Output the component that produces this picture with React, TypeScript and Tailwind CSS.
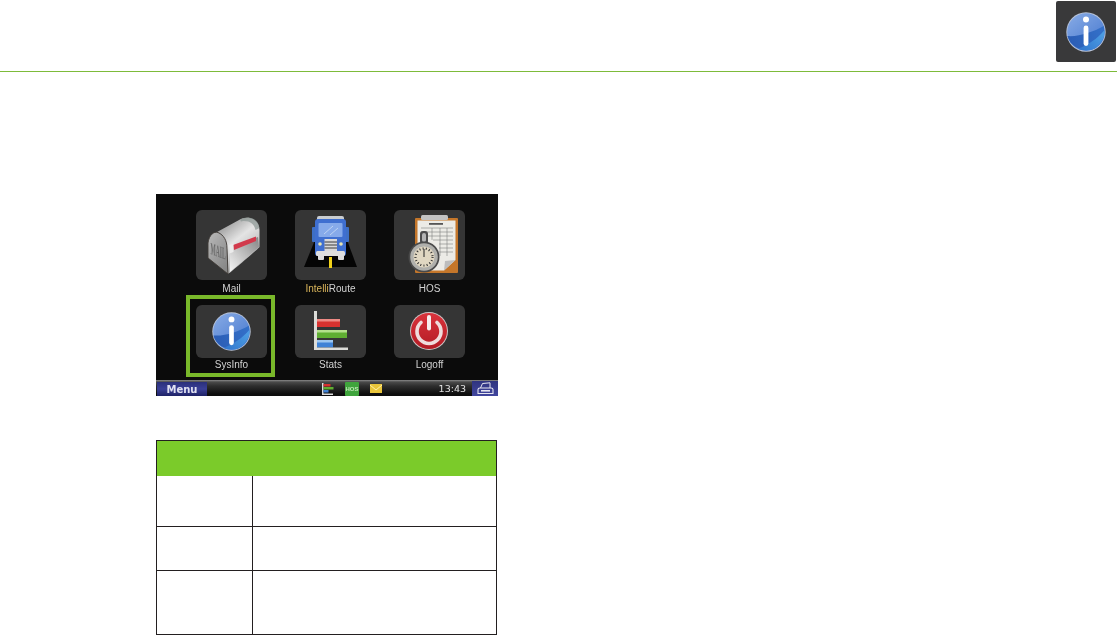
import React from "react";

const font = { fontFamily: '"Liberation Sans", "Noto Sans", sans-serif' };

function InfoGlyph({ id, size }: { id: string; size: number }) {
  return (
    <svg width={size} height={size} viewBox="0 0 40 40" className="blur-[0.4px]">
      <defs>
        <linearGradient id={`${id}a`} x1="0.15" y1="0" x2="0.8" y2="0.8">
          <stop offset="0" stopColor="#84a8e4" />
          <stop offset="1" stopColor="#4f7fd2" />
        </linearGradient>
        <linearGradient id={`${id}b`} x1="0" y1="0.7" x2="1" y2="0.5">
          <stop offset="0" stopColor="#2a5cb4" />
          <stop offset="1" stopColor="#336fc8" />
        </linearGradient>
        <linearGradient id={`${id}c`} x1="0" y1="1" x2="1" y2="0.3">
          <stop offset="0" stopColor="#2f74cc" />
          <stop offset="1" stopColor="#4c9ce2" />
        </linearGradient>
      </defs>
      <circle cx="20" cy="20" r="19.7" fill="#b9c4d8" />
      <circle cx="20" cy="20" r="18.8" fill={`url(#${id}a)`} />
      <path d="M1.4 24 C13 25 27 20 37.8 14 C39.5 24 36 32 29 36 C20 41 5 37 1.4 24Z" fill={`url(#${id}b)`} />
      <path d="M12 36.8 C22 33 31 27 38.6 18 C38.8 27 34 33 28 36.8 C23 39 17 38.8 12 36.8Z" fill={`url(#${id}c)`} />
      <circle cx="20" cy="7.6" r="3" fill="#fff" />
      <rect x="17.6" y="13.5" width="4.8" height="20.5" rx="2.4" fill="#fff" />
    </svg>
  );
}

function Mailbox() {
  return (
    <svg width="71" height="70" viewBox="0 0 71 70" className="blur-[0.35px]">
      <defs>
        <linearGradient id="mb1" x1="0.2" y1="0" x2="0.8" y2="1">
          <stop offset="0" stopColor="#8f8f8f" />
          <stop offset="0.4" stopColor="#e4e4e4" />
          <stop offset="1" stopColor="#9a9a9a" />
        </linearGradient>
        <linearGradient id="mb2" x1="0" y1="0" x2="0.7" y2="1">
          <stop offset="0" stopColor="#b9b9b9" />
          <stop offset="1" stopColor="#878787" />
        </linearGradient>
        <linearGradient id="mb3" x1="0" y1="1" x2="1" y2="0">
          <stop offset="0" stopColor="#f6f6f6" />
          <stop offset="1" stopColor="#858585" />
        </linearGradient>
      </defs>
      <path d="M21 22 L43 10 C52 5 63 9 63.5 20 L63.5 37 C63 38 33 64 32 64 L31 38 C30 30 26 24 21 22Z" fill="url(#mb1)" />
      <path d="M12 33 C13 25 18 21 22 22.5 C28 25 31 31 31 38 L32 64 L12 48Z" fill="url(#mb2)" stroke="#3f3a35" strokeWidth="0.9" />
      <path d="M34 39 L62 27 L63 37 L34 62Z" fill="url(#mb3)" />
      <path d="M37 35 L60 26.5 L60 31 L38 40Z" fill="#d23a4c" />
      <path d="M33.5 35 L37.5 33.5 L37.5 42 L33.5 43.5Z" fill="#ececec" />
      <path d="M44 9.5 C52 5 62 8 63.5 18 L59.5 20 C58 13 52 10 45 11.5Z" fill="#8e9896" opacity="0.75" />
      <text x="0" y="0" fontSize="10" fontWeight="bold" fill="#6b6b6b" fontFamily="Liberation Serif, serif" transform="translate(14.5 44) skewY(20) scale(0.56 1.7)">MAIL</text>
    </svg>
  );
}

function Truck() {
  return (
    <svg width="71" height="70" viewBox="0 0 71 70" className="blur-[0.35px]">
      <path d="M20 30 L52 30 L62 57 L9 57Z" fill="#050505" />
      <rect x="34" y="47" width="3" height="11" fill="#f2d21a" />
      <rect x="23" y="44" width="6" height="6" rx="1" fill="#dcdcdc" />
      <rect x="43" y="44" width="6" height="6" rx="1" fill="#dcdcdc" />
      <rect x="17" y="17" width="5.5" height="15" rx="1" fill="#3e6fc5" />
      <rect x="48.5" y="17" width="5.5" height="15" rx="1" fill="#3e6fc5" />
      <rect x="22" y="6" width="27" height="8" rx="2" fill="#c9cdd1" />
      <rect x="20" y="9" width="31" height="37" rx="3" fill="#3f6fd0" />
      <rect x="23.5" y="13" width="24" height="14" rx="1" fill="#86aaea" />
      <path d="M29 24 L38 16 M35 25 L43 18" stroke="#bcd2f3" strokeWidth="1" />
      <rect x="29.5" y="29" width="12.5" height="12" fill="#d9d9d9" />
      <path d="M29.5 32 H42 M29.5 35 H42 M29.5 38 H42" stroke="#3a3a3a" strokeWidth="1" />
      <circle cx="25" cy="34" r="1.8" fill="#e8e6b0" />
      <circle cx="46" cy="34" r="1.8" fill="#e8e6b0" />
      <rect x="21" y="41" width="29" height="5" rx="1.5" fill="#dedede" />
    </svg>
  );
}

function Hos() {
  return (
    <svg width="71" height="70" viewBox="0 0 71 70" className="blur-[0.35px]">
      <rect x="21" y="8" width="43" height="55" rx="1" fill="#c4762a" />
      <path d="M23.5 10.5 H61.5 V50 L50 60.5 H23.5Z" fill="#ecebe6" />
      <path d="M50 60.5 L61.5 50 L51 51Z" fill="#bdbdbd" />
      <rect x="27" y="5" width="27" height="5" rx="1.5" fill="#c2c2c2" />
      <rect x="35" y="13" width="14" height="1.8" fill="#555" />
      <path d="M27 18 H59 M27 22 H59 M33 26 H59 M39 30 H59 M45 34 H59 M45 38 H59 M45 42 H59 M38 18 V30 M46 18 V46 M53 18 V46" stroke="#7f7f7f" strokeWidth="0.6" />
      <rect x="26" y="21" width="8" height="13" rx="3" fill="#4d4d4d" />
      <rect x="28" y="23" width="4" height="9" rx="2" fill="#b5b5b5" />
      <circle cx="30" cy="47" r="15.5" fill="#4a4a4a" />
      <circle cx="30" cy="47" r="13.8" fill="#b0b0ac" />
      <circle cx="30" cy="47" r="10.5" fill="#e0d7c2" />
      <circle cx="30" cy="47" r="8.5" fill="none" stroke="#333" strokeWidth="2.2" strokeDasharray="1 2.2" />
      <path d="M30 47 V39" stroke="#222" strokeWidth="1" />
    </svg>
  );
}

function Stats() {
  return (
    <svg width="71" height="53" viewBox="0 0 71 53" className="blur-[0.35px]">
      <rect x="22" y="14" width="23" height="8" fill="#d8322f" />
      <rect x="22" y="14" width="23" height="2.5" fill="#ee8a84" />
      <rect x="22" y="25" width="30" height="8" fill="#5fae32" />
      <rect x="22" y="25" width="30" height="2.5" fill="#b4e08c" />
      <rect x="22" y="35" width="16" height="7.5" fill="#3f82d6" />
      <rect x="22" y="35" width="16" height="2.5" fill="#9cc6ef" />
      <rect x="19" y="6" width="3" height="39" fill="#dcdcd8" />
      <rect x="19" y="42.5" width="34" height="2.5" fill="#dcdcd8" />
    </svg>
  );
}

function Power() {
  return (
    <svg width="71" height="53" viewBox="0 0 71 53" className="blur-[0.35px]">
      <defs>
        <linearGradient id="pw" x1="0" y1="0" x2="0" y2="1">
          <stop offset="0" stopColor="#d9333c" />
          <stop offset="1" stopColor="#b31b24" />
        </linearGradient>
      </defs>
      <circle cx="35" cy="26" r="19" fill="#cfc4c4" />
      <circle cx="35" cy="26" r="18" fill="url(#pw)" />
      <path d="M27 17.5 A12 12 0 1 0 43 17.5" fill="none" stroke="#efdcdc" strokeWidth="3.6" strokeLinecap="round" />
      <rect x="33" y="10" width="4" height="15.5" rx="2" fill="#f7eeee" />
    </svg>
  );
}

function Tile({
  h,
  label,
  mt,
  children,
}: {
  h: string;
  label: React.ReactNode;
  mt: string;
  children: React.ReactNode;
}) {
  return (
    <div className="flex flex-col items-center">
      <div className={`w-[71px] ${h} rounded-[6px] bg-[#353535] flex items-start justify-center overflow-hidden`}>
        {children}
      </div>
      <div className={`${mt} h-[12px] text-[10px] leading-[12px] text-[#d2d2d2] whitespace-nowrap blur-[0.3px]`}>{label}</div>
    </div>
  );
}

function Taskbar() {
  return (
    <div className="mt-auto h-[16px] flex bg-[linear-gradient(to_bottom,#8b8b8b_0px,#4a4a4a_2px,#2e2e2e_6px,#0d0d0d_14px)]">
      <div className="w-[50px] h-[14px] self-end ml-px flex items-center justify-center bg-[linear-gradient(to_bottom,#2a2f7a,#3a3f96_50%,#1e2266)] text-[#dfe0f0] text-[10px] font-bold blur-[0.2px]" style={{ fontFamily: '"DejaVu Sans", sans-serif' }}>
        Menu
      </div>
      <div className="flex-1 flex items-end pl-[115px]">
        <svg width="12" height="13" viewBox="0 0 12 13" className="mb-px blur-[0.3px]">
          <rect x="0" y="1" width="1.5" height="12" fill="#ddd" />
          <rect x="1.5" y="2" width="7" height="2.5" fill="#d8322f" />
          <rect x="1.5" y="5" width="10" height="2.5" fill="#5fae32" />
          <rect x="1.5" y="8" width="5" height="2.5" fill="#3f82d6" />
          <rect x="0" y="11.5" width="11" height="1.5" fill="#ddd" />
        </svg>
        <div className="ml-[11px] w-[14px] h-[14px] rounded-[1px] bg-[#3fa43c] text-[#bfe8b5] text-[6px] leading-[14px] text-center font-bold blur-[0.2px]">
          HOS
        </div>
        <svg width="12" height="9" viewBox="0 0 12 9" className="ml-[11px] mb-[3px]">
          <rect width="12" height="9" fill="#e9c53a" />
          <path d="M0 1 L6 6 L12 1" fill="none" stroke="#fff2a8" strokeWidth="1" />
        </svg>
        <div className="ml-auto mr-[6px] text-[9.5px] leading-[15px] text-[#e2e2e2] blur-[0.2px]" style={{ fontFamily: '"DejaVu Sans", sans-serif' }}>
          13:43
        </div>
      </div>
      <div className="w-[26px] h-[15px] self-end flex items-center justify-center bg-[linear-gradient(to_bottom,#2f347f,#41469e)]">
        <svg width="17" height="13" viewBox="0 0 17 13" className="blur-[0.2px]">
          <path d="M3.5 6 L5.5 1.5 L13 0.8 L13 6" fill="none" stroke="#e5e5f0" strokeWidth="1" />
          <path d="M1 7.5 C1 6.5 2 6 3 6 H14 C15 6 16 6.5 16 7.5 V11.5 H1Z" fill="none" stroke="#e5e5f0" strokeWidth="1.1" />
          <rect x="4" y="8" width="9" height="1.6" fill="#e5e5f0" />
        </svg>
      </div>
    </div>
  );
}

export default function App() {
  return (
    <div className="w-[1117px] h-[635px] overflow-hidden bg-white" style={font}>
      <header className="h-[71px] flex justify-end pr-px pt-px">
        <div className="w-[60px] h-[61px] rounded-[2px] bg-[#39393a] flex items-center justify-center">
          <InfoGlyph id="top" size={40} />
        </div>
      </header>
      <div className="h-px bg-[#7dbb3a]" />
      <main className="pl-[156px] pt-[122px]">
        <div className="relative w-[342px] h-[202px] bg-[#0b0b0b] flex flex-col">
          <div className="grid grid-cols-[repeat(3,71px)] gap-x-[28px] gap-y-[10px] pl-[40px] pt-[16px]">
            <Tile h="h-[70px]" mt="mt-[3px]" label="Mail"><Mailbox /></Tile>
            <Tile h="h-[70px]" mt="mt-[3px]" label={<><span className="text-[#d8b45a]">Intelli</span>Route</>}><Truck /></Tile>
            <Tile h="h-[70px]" mt="mt-[3px]" label="HOS"><Hos /></Tile>
            <Tile h="h-[53px]" mt="mt-px" label="SysInfo">
              <div className="pt-[7px]"><InfoGlyph id="sys" size={39} /></div>
            </Tile>
            <Tile h="h-[53px]" mt="mt-px" label="Stats"><Stats /></Tile>
            <Tile h="h-[53px]" mt="mt-px" label="Logoff"><Power /></Tile>
          </div>
          <div className="absolute left-[30px] top-[101px] w-[89px] h-[82px] border-[4px] border-[#79b82a]" />
          <Taskbar />
        </div>
        <div className="mt-[44px] w-[341px] h-[195px] border border-[#231f20] grid grid-cols-[96px_1fr] grid-rows-[35px_51px_44px_1fr]">
          <div className="col-span-2 bg-[#7bcb2a]" />
          <div className="border-r border-b border-[#231f20]" />
          <div className="border-b border-[#231f20]" />
          <div className="border-r border-b border-[#231f20]" />
          <div className="border-b border-[#231f20]" />
          <div className="border-r border-[#231f20]" />
          <div />
        </div>
      </main>
    </div>
  );
}
